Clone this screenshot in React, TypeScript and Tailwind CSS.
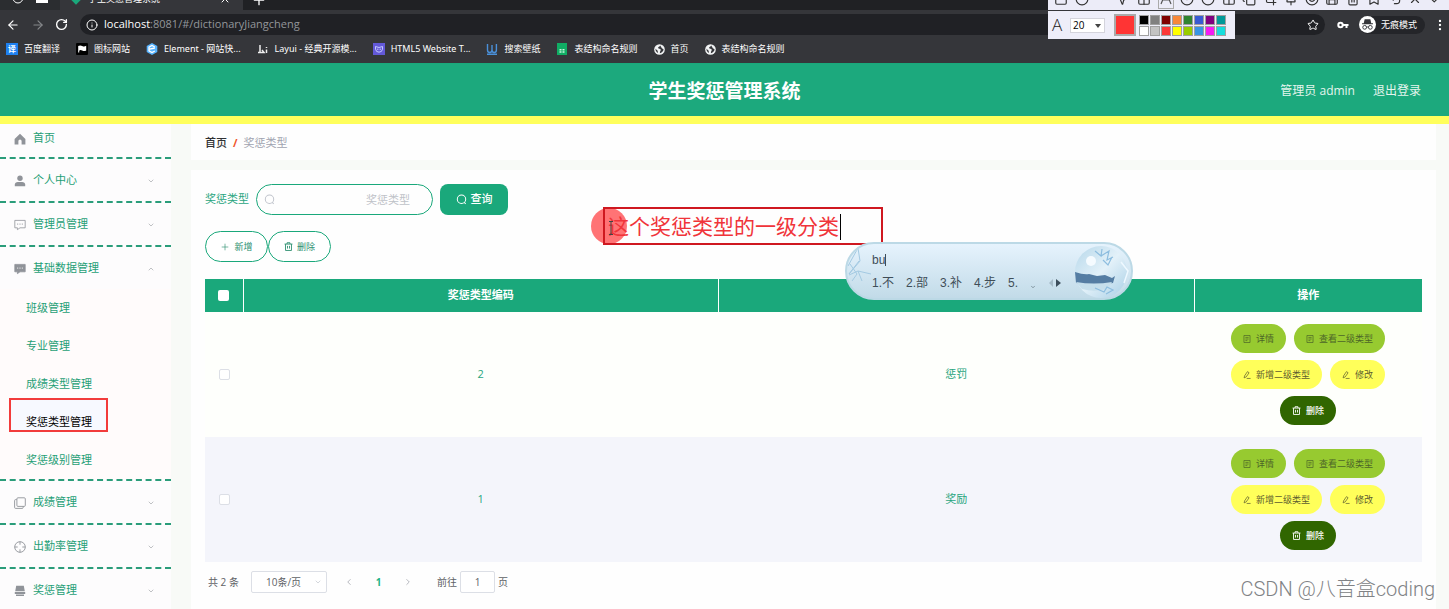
import { ReactNode, useState } from 'react';
import {
  ArrowLeft, ArrowRight, Bookmark, Check, ChevronDown, ChevronLeft, ChevronRight, ChevronUp, Circle,
  CircleDot, Copy, Crop, Grid2x2, Info, Minus, MoreVertical, MousePointer2, Pin, Plus, RotateCw, Save, Smile,
  Square, Star, Trash2, Undo2, X
} from 'lucide-react';

type MenuEntry = {
  label: string;
  icon: ReactNode;
  children?: string[];
};

type RewardType = {
  code: number;
  name: string;
};

const rewardTypes: RewardType[] = [
  { code: 2, name: '惩罚' },
  { code: 1, name: '奖励' }
];

const swatches = [
  'bg-black', 'bg-[#808080]', 'bg-[#800000]', 'bg-[#f7883a]', 'bg-[#308430]', 'bg-[#385ad3]', 'bg-[#800080]', 'bg-[#009999]',
  'bg-white', 'bg-[#c3c3c3]', 'bg-[#fb3838]', 'bg-[#ffff01]', 'bg-[#99cc00]', 'bg-[#3894e4]', 'bg-[#f31bf3]', 'bg-[#16dcdc]'
];

const drawTools = [Square, Circle, Minus, MousePointer2, Grid2x2, CircleDot, Circle, Grid2x2, Copy, Crop, Pin, Smile, Save, Trash2, Bookmark, Undo2, X, Check];

function HomeIcon() {
  return (
    <svg viewBox="0 0 12 12" className="size-3 fill-[#909399]">
      <path d="M6 .8 11.4 6v5.4H7.6V8a1.6 1.6 0 0 0-3.2 0v3.4H.6V6z" />
    </svg>
  );
}

function UserIcon() {
  return (
    <svg viewBox="0 0 12 12" className="size-3 fill-[#909399]">
      <circle cx="6" cy="3.3" r="2.7" />
      <path d="M.8 11.3V9.6c0-1.6 1.4-2.6 3-2.6h4.4c1.6 0 3 1 3 2.6v1.7z" />
    </svg>
  );
}

function ChatIcon({ solid = false }: { solid?: boolean }) {
  return (
    <svg viewBox="0 0 12 12" className="size-3">
      <path d="M.8 1.4h10.4v7.4H6l-2.6 1.9V8.8H.8z" fill={solid ? '#909399' : 'none'} stroke="#909399" strokeWidth=".8" />
      <path d="M3.2 5.1h1M5.5 5.1h1M7.8 5.1h1" stroke={solid ? '#fff' : '#909399'} strokeWidth="1" />
    </svg>
  );
}

function CopyIcon() {
  return (
    <svg viewBox="0 0 12 12" className="size-3 fill-none stroke-[#909399]" strokeWidth=".9">
      <rect x="2.9" y=".8" width="8.4" height="8.6" rx="1" />
      <path d="M2.7 2.6H1.6a1 1 0 0 0-1 1v6.8a1 1 0 0 0 1 1h6.6a1 1 0 0 0 1-1v-.9" />
    </svg>
  );
}

function AimIcon() {
  return (
    <svg viewBox="0 0 12 12" className="size-3 fill-none stroke-[#909399]" strokeWidth=".9">
      <circle cx="6" cy="6" r="5.3" />
      <path d="M6 .7v3M6 8.3v3M.7 6h3M8.3 6h3" />
    </svg>
  );
}

function ShopIcon() {
  return (
    <svg viewBox="0 0 12 12" className="size-3 fill-[#909399]">
      <path d="M2.2.8h7.6l1 5.4H1.2zM.8 6.9h10.4v2H.8zM2 9.4h8v1.7H2z" />
    </svg>
  );
}

function DocIcon() {
  return (
    <svg viewBox="0 0 10 10" className="size-2 fill-none stroke-current" strokeWidth=".9">
      <path d="M1.2.6h7.6v8.8H1.2zM3 3h4M3 5h4M3 7h2.4" />
    </svg>
  );
}

function EditIcon() {
  return (
    <svg viewBox="0 0 10 10" className="size-2 fill-none stroke-current" strokeWidth=".9">
      <path d="M1.4 8.6 2 6l3.6-5.2 2 1.4L4 7.4zM4.6 9.3h4.9" />
    </svg>
  );
}

function TrashIcon() {
  return (
    <svg viewBox="0 0 10 10" className="size-[9px] fill-none stroke-current" strokeWidth="1">
      <path d="M.6 2.3h8.8M3.4 2.3V.8h3.2v1.5M1.7 2.3v7.1h6.6V2.3M3.9 4.3v3M6.1 4.3v3" />
    </svg>
  );
}

function SearchIcon() {
  return (
    <svg viewBox="0 0 12 12" className="size-[11px] fill-none stroke-current" strokeWidth="1.1">
      <circle cx="6" cy="5.7" r="4.6" />
      <path d="m9 9.2 1.6 1.6" />
    </svg>
  );
}

function GlobeIcon() {
  return (
    <svg viewBox="0 0 12 12" className="size-[11px]">
      <circle cx="6" cy="6" r="5.8" fill="#f1f3f4" />
      <path d="M6.8 1.6c-.3 1.6-2.7 1.2-2.3 2.8.3 1 2.4.4 2.8 1.6.4 1.3-1 1.4-.9 4.2 2-.5 4-2.2 4-4.4L8.6 4.6zM1.6 5.2 4 7.3l.3 2.4C2.7 9 1.5 7.4 1.6 5.2z" fill="#35363a" />
    </svg>
  );
}

const bookmarks: { label: string; icon: ReactNode }[] = [
  { label: '百度翻译', icon: <span className="flex size-3 items-center justify-center bg-[#1e80f0] text-[8px] font-bold text-white">译</span> },
  {
    label: '图标网站',
    icon: (
      <svg viewBox="0 0 12 12" className="size-3"><rect width="12" height="12" rx="1" /><path d="M2.2 9.5V3q2-1.2 4 0t4-.2v4.8q-2 1-4 0t-3 .1v1.8z" fill="#fff" /></svg>
    )
  },
  {
    label: 'Element - 网站快...',
    icon: (
      <svg viewBox="0 0 12 12" className="size-3"><path d="M6 0 11.3 3v6L6 12 .7 9V3z" fill="#58b4ff" /><path d="M8.8 4 6 2.5 3 4.2v3.6l3 1.7L8.8 8M3.5 6.2 8.8 5" fill="none" stroke="#fff" strokeWidth="1.3" /></svg>
    )
  },
  {
    label: 'Layui - 经典开源模...',
    icon: (
      <svg viewBox="0 0 12 12" className="size-3 fill-none stroke-[#eee]" strokeWidth="1.5"><path d="M3 2v7.5H1M3.5 9.5H7L5 7M9.5 4v1M9.5 6.5V10" /></svg>
    )
  },
  {
    label: 'HTML5 Website T...',
    icon: (
      <svg viewBox="0 0 12 12" className="size-3"><rect width="12" height="12" fill="#6359d8" /><path d="M2.5 3.5q3.5 2 7 0v2.7q-.5 3-3.5 3t-3.5-3z" fill="none" stroke="#c4c8ff" /><path d="M4.3 6.2h1M6.7 6.2h1" stroke="#fff" /></svg>
    )
  },
  {
    label: '搜索壁纸',
    icon: (
      <svg viewBox="0 0 12 12" className="size-3 fill-none stroke-[#4a90d9]" strokeWidth="1.4"><path d="M1.5 1v6q0 2.5 2.2 2.5T6 7V2M6 7q0 2.5 2.2 2.5T10.4 7V1M1 11.3h10" /></svg>
    )
  },
  {
    label: '表结构命名规则',
    icon: (
      <svg viewBox="0 0 12 12" className="size-3"><path d="M1 0h10v12H1z" fill="#10ad64" /><path d="M3.5 6h2v1.5h-2zM6.5 6h2v1.5h-2zM3.5 8.3h2v1.5h-2zM6.5 8.3h2v1.5h-2z" fill="#c9f5de" /></svg>
    )
  },
  { label: '首页', icon: <GlobeIcon /> },
  { label: '表结构命名规则', icon: <GlobeIcon /> }
];

const menu: MenuEntry[] = [
  { label: '个人中心', icon: <UserIcon /> },
  { label: '管理员管理', icon: <ChatIcon /> },
  { label: '基础数据管理', icon: <ChatIcon solid />, children: ['班级管理', '专业管理', '成绩类型管理', '奖惩类型管理', '奖惩级别管理'] },
  { label: '成绩管理', icon: <CopyIcon /> },
  { label: '出勤率管理', icon: <AimIcon /> },
  { label: '奖惩管理', icon: <ShopIcon /> }
];

function BrowserBar() {
  return (
    <div className="shrink-0 bg-[#35363a] text-white">
      <div className="flex h-[10px] overflow-hidden bg-[#202124]">
        <div className="flex w-[60px] shrink-0 justify-between bg-[#2b2d30] px-3">
          <Circle className="-mt-2 size-3" />
          <div className="h-[3px] w-3 bg-white" />
        </div>
        <div className="-mt-3 flex h-[22px] w-[183px] shrink-0 items-center gap-2 bg-[#35363a] px-3 text-[9px]">
          <span className="size-2 rotate-45 bg-[#1aa87b]" />
          <span className="grow">学生奖惩管理系统</span>
          <X className="size-3" />
        </div>
        <Plus className="-mt-2 ml-2 size-4" />
      </div>
      <div className="flex h-[25px] items-center pt-1">
        <div className="flex w-20 shrink-0 items-center justify-between pr-3 pl-[6px]">
          <button type="button" aria-label="后退"><ArrowLeft className="size-[14px]" /></button>
          <button type="button" aria-label="前进"><ArrowRight className="size-[14px] text-[#85878a]" /></button>
          <button type="button" aria-label="刷新"><RotateCw className="size-[13px]" strokeWidth={2.5} /></button>
        </div>
        <div className="flex h-[21px] grow items-center rounded-full bg-[#202125] pr-[6px] pl-[6px] text-[11px] text-[#93969a]">
          <Info className="mr-[6px] size-3 text-white" />
          <span className="grow"><span className="text-white">localhost</span>:8081/#/dictionaryJiangcheng</span>
          <button type="button" aria-label="收藏"><Star className="size-3 text-white" /></button>
        </div>
        <div className="flex shrink-0 items-center pl-3">
          <svg viewBox="0 0 12 8" className="h-2 w-3">
            <circle cx="3.5" cy="4" r="2.2" fill="none" stroke="#fff" strokeWidth="2" />
            <path d="M6 4h5.5M9.5 4v3" stroke="#fff" strokeWidth="2" />
          </svg>
          <span className="ml-[10px] flex h-[18px] items-center gap-[5px] rounded-full bg-[#242529] pr-2 text-[9px]">
            <svg viewBox="0 0 18 18" className="size-[17px]">
              <circle cx="9" cy="9" r="9" fill="#fff" />
              <path d="M6 3.5h6l1 4.200h1.800v1H3.200v-1H5z" fill="#35363a" />
              <path d="M8 12q1-.8 2 0" fill="none" stroke="#35363a" />
              <circle cx="6" cy="12" r="2" fill="none" stroke="#35363a" />
              <circle cx="12" cy="12" r="2" fill="none" stroke="#35363a" />
            </svg>
            无痕模式
          </span>
          <MoreVertical className="mr-[2px] ml-2 size-[14px]" strokeWidth={2} />
        </div>
      </div>
      <nav className="flex h-7 items-center gap-4 px-[6px] font-['Noto_Sans','Noto_Sans_CJK_SC',sans-serif] text-[9px]">
        {bookmarks.map((item, index) => (
          <a key={index} href="#" className="flex shrink-0 items-center gap-[6px]">{item.icon}{item.label}</a>
        ))}
      </nav>
      <div className="h-px bg-[#1aa87b]" />
    </div>
  );
}

function DrawToolbar() {
  return (
    <div className="absolute top-0 right-0 w-[401px]">
      <div className="h-[10px] overflow-hidden bg-[#ececf8] px-[6px]">
        <div className="-mt-3 flex h-[22px] items-center justify-between text-[#333]">
          {drawTools.slice(0, 5).map((Tool, index) => <Tool key={index} className="size-[14px]" />)}
          <svg viewBox="0 0 16 22" className="h-[22px] w-4 fill-none stroke-[#555]">
            <rect x=".5" y=".5" width="15" height="20" stroke="#aaa" />
            <path d="m3 16 5-12 5 12M5 12h6" strokeWidth="1.2" />
          </svg>
          {drawTools.slice(5).map((Tool, index) => <Tool key={index} className="size-[14px]" />)}
        </div>
      </div>
      <div className="mt-px flex h-7 w-[187px] items-center bg-[#eeeef9] pl-1">
        <span className="w-[18px] text-[17px] font-light text-[#222]">A</span>
        <div className="relative flex">
          <select aria-label="字号" className="h-[15px] w-[35px] appearance-none border border-[#d4d4dc] bg-white pl-[2px] text-[10px] leading-3 text-black">
            <option>20</option>
          </select>
          <span className="pointer-events-none absolute top-[6px] right-1 border-x-[3px] border-t-4 border-x-transparent border-t-[#444]" />
        </div>
        <button type="button" aria-label="当前颜色" className="mr-[3px] ml-[9px] size-[22px] border-2 border-[#aaa] bg-[#ff3434]" />
        <div className="grid grid-cols-8 gap-px">
          {swatches.map((color) => (
            <button key={color} type="button" aria-label="颜色" className={`size-[10px] border border-[#a0a0a0] ${color}`} />
          ))}
        </div>
      </div>
    </div>
  );
}

function Sidebar({ active, onSelect }: { active: string; onSelect: (label: string) => void }) {
  return (
    <aside className="w-[171px] shrink-0 bg-[#fdfcfd] text-[11px] text-[#1f9f76]">
      <a href="#" className="flex h-[35px] items-start gap-[7px] border-b-2 border-dashed border-[#2a9d7a] pt-[6px] pl-[14px]">
        <span className="pt-[3px]"><HomeIcon /></span>首页
      </a>
      <ul>
        {menu.map((entry) => (
          <li key={entry.label} className="border-b-2 border-dashed border-[#2a9d7a]">
            <button type="button" className="flex h-[42px] w-full items-center gap-[7px] pt-px pr-4 pl-[14px]">
              {entry.icon}
              <span className="grow text-left">{entry.label}</span>
              {entry.children ? <ChevronUp className="size-2 text-[#a0a3a8]" /> : <ChevronDown className="size-2 text-[#a0a3a8]" />}
            </button>
            {entry.children ? (
              <ul className="bg-[#fffbfb]">
                {entry.children.map((child) => (
                  <li key={child} className="relative">
                    {child === '奖惩类型管理' ? <span className="pointer-events-none absolute -top-[5px] left-[9px] h-[34px] w-[99px] border-2 border-[#f23b3b] bg-[#f7f9ff]" /> : null}
                    <button
                      type="button"
                      onClick={() => onSelect(child)}
                      className={`relative flex h-[38px] w-full items-center pl-[26px] ${child === active ? 'text-black' : ''}`}
                    >
                      {child}
                    </button>
                  </li>
                ))}
              </ul>
            ) : null}
          </li>
        ))}
      </ul>
    </aside>
  );
}

function RowActions() {
  const base = 'flex h-[29px] items-center gap-[5px] rounded-full px-3';
  return (
    <div className="flex flex-col items-center gap-[7px] text-[9px]">
      <div className="flex gap-2">
        <button type="button" className={`${base} bg-[#97ca30] text-[#4c6628]`}><DocIcon />详情</button>
        <button type="button" className={`${base} bg-[#97ca30] text-[#4c6628]`}><DocIcon />查看二级类型</button>
      </div>
      <div className="flex gap-2">
        <button type="button" className={`${base} bg-[#ffff5a] text-[#5d5d30]`}><EditIcon />新增二级类型</button>
        <button type="button" className={`${base} bg-[#ffff5a] text-[#5d5d30]`}><EditIcon />修改</button>
      </div>
      <button type="button" className={`${base} bg-[#306600] font-medium text-white`}><TrashIcon />删除</button>
    </div>
  );
}

function RewardTable() {
  return (
    <table className="w-full table-fixed text-center text-[11px] text-[#2aa57e]">
      <thead className="bg-[#1aa87b] text-white">
        <tr className="h-[33px]">
          <th className="w-[38px] border-r border-white">
            <input type="checkbox" aria-label="全选" className="mx-auto block size-[11px] appearance-none rounded-xs bg-white" />
          </th>
          <th className="border-r border-white">奖惩类型编码</th>
          <th aria-label="奖惩类型" className="border-r border-white" />
          <th className="w-[228px]">操作</th>
        </tr>
      </thead>
      <tbody>
        {rewardTypes.map((item) => (
          <tr key={item.code} className="h-[125px] bg-[#fefffc] even:bg-[#f4f5fb]">
            <td>
              <input type="checkbox" aria-label={`选择${item.name}`} className="mx-auto block size-[11px] appearance-none rounded-xs border border-[#dcdfe6] bg-white" />
            </td>
            <td>{item.code}</td>
            <td>{item.name}</td>
            <td><RowActions /></td>
          </tr>
        ))}
      </tbody>
    </table>
  );
}

function Pagination() {
  return (
    <div className="mt-[9px] flex h-[22px] items-center pl-[3px] text-[10px] text-[#606266]">
      <span className="w-[43px]">共 2 条</span>
      <div className="relative">
        <select aria-label="每页条数" className="h-[22px] w-[76px] appearance-none rounded-xs border border-[#dcdfe6] bg-white pl-[14px]">
          <option>10条/页</option>
        </select>
        <ChevronDown className="pointer-events-none absolute top-[7px] right-[5px] size-2 text-[#c0c4cc]" />
      </div>
      <button type="button" aria-label="上一页" className="ml-[17px]"><ChevronLeft className="size-[10px] text-[#a8abb2]" /></button>
      <button type="button" className="w-[49px] font-bold text-[#1fb385]">1</button>
      <button type="button" aria-label="下一页"><ChevronRight className="size-[10px] text-[#a8abb2]" /></button>
      <label className="ml-6 flex items-center gap-[3px]">
        前往
        <input defaultValue="1" className="h-[22px] w-[35px] rounded-xs border border-[#dcdfe6] bg-white text-center" />
        页
      </label>
    </div>
  );
}

function ImePopup() {
  return (
    <div className="absolute top-[242px] left-[845px] flex h-[58px] w-[288px] overflow-hidden rounded-full border-2 border-[#bcd9e6] bg-linear-to-b from-[#e6f3fd] to-[#c2dbe8] font-['Liberation_Sans','Noto_Sans_CJK_SC',sans-serif] text-[12px] text-[#3f4e58]">
      <svg viewBox="0 0 25 54" className="h-full w-[25px] shrink-0 fill-none stroke-[#a3c9e2]" strokeWidth="1">
        <path d="M1 22 11 4l2 13-11 13 10-13M2 31l9-4 13 3M3 20l7 10-5 7M11 27l4 10" />
      </svg>
      <div className="flex grow flex-col justify-center">
        <span className="flex h-[23px] items-center">bu<span className="h-3 border-l border-[#3f4e58]" /></span>
        <div className="flex items-center gap-3 leading-[22px]">
          <span>1.不</span><span>2.部</span><span>3.补</span><span>4.步</span><span>5.</span>
          <ChevronDown className="mt-2 size-[6px]" />
          <svg viewBox="0 0 14 10" className="h-[10px] w-[14px]">
            <path d="M5 1v8L1 5z" fill="#a6bcc9" />
            <path d="M8 1v8l5-4z" fill="#3d4f5c" />
          </svg>
        </div>
      </div>
      <svg viewBox="0 0 58 54" className="h-full w-[58px] shrink-0">
        <defs>
          <linearGradient id="orb" x1="0" y1="0" x2="1" y2="1">
            <stop offset="0" stopColor="#b6d7ea" />
            <stop offset=".5" stopColor="#e3f1f9" />
            <stop offset="1" stopColor="#a8cfe6" />
          </linearGradient>
        </defs>
        <circle cx="28" cy="28" r="26" fill="url(#orb)" />
        <circle cx="18" cy="17" r="5" fill="#f5fbff" />
        <path d="M2 28q9 3 14 2l8 2 8-1 7 3 3-2-2 7q-16 3-37 0z" fill="#557da3" />
        <path d="M3 38q18 3 36 0l-4 6q-12 5-26 1z" fill="#c6dfec" />
        <path d="m22 7 6 5 1-7M28 12l8-5-2 9 6-3M30 16l5 5 4-8M22 44l9 4 3-5 6 3-7 4" fill="none" stroke="#8dbddf" strokeWidth="1.2" />
        <path d="m48 18 7 9-4 12" fill="none" stroke="#eef8ff" strokeWidth="1.5" />
      </svg>
    </div>
  );
}

export default function App() {
  const [active, setActive] = useState('奖惩类型管理');
  const [keyword, setKeyword] = useState('');

  return (
    <div className="relative flex h-screen flex-col overflow-hidden bg-[#f8faf7] font-['Open_Sans','Noto_Sans_CJK_SC',sans-serif]">
      <BrowserBar />

      <header className="grid h-[60px] shrink-0 grid-cols-3 items-center border-b-8 border-[#ffff5c] bg-[#1ca97d] pt-[2px] text-white">
        <h1 className="col-start-2 text-center text-[19px] font-bold">学生奖惩管理系统</h1>
        <div className="flex justify-end gap-[18px] pr-7 text-[12px] text-[#e4f5ee]">
          <span>管理员 admin</span>
          <a href="#">退出登录</a>
        </div>
      </header>

      <div className="flex min-h-0 grow">
        <Sidebar active={active} onSelect={setActive} />

        <main className="flex grow flex-col pr-[13px] pl-5">
          <nav className="flex h-9 shrink-0 items-center gap-[6px] bg-[#fefefe] px-[14px] pt-[2px] text-[11px]">
            <a href="#" className="font-medium text-[#303133]">首页</a>
            <span className="font-bold text-[#f0562c]">/</span>
            <span className="text-[#a0a3b0]">奖惩类型</span>
          </nav>

          <section className="mt-[10px] grow bg-[#fefefe] px-[14px] pt-[14px]">
            <form onSubmit={(event) => event.preventDefault()} className="mb-4 flex items-center gap-[7px] text-[11px]">
              <label htmlFor="keyword" className="text-[#2aa57e]">奖惩类型</label>
              <div className="relative">
                <span className="absolute top-[10px] left-2 text-[#c0c4cc]"><SearchIcon /></span>
                <input
                  id="keyword"
                  value={keyword}
                  onChange={(event) => setKeyword(event.currentTarget.value)}
                  placeholder="奖惩类型"
                  className="h-[31px] w-[177px] rounded-full border border-[#1aa87b] pr-[22px] pl-6 text-right placeholder:text-[#bfc2c8]"
                />
              </div>
              <button type="submit" className="flex h-[31px] w-[68px] items-center justify-center gap-1 rounded-lg bg-[#1aa87b] font-medium text-white">
                <SearchIcon />查询
              </button>
            </form>

            <div className="mb-[17px] flex text-[9px] text-[#2c8f6f]">
              <button type="button" className="flex h-[31px] w-[63px] items-center justify-center gap-1 rounded-full border border-[#1aa87b] bg-white">
                <Plus className="size-[10px]" strokeWidth={1.5} />新增
              </button>
              <button type="button" className="flex h-[31px] w-[63px] items-center justify-center gap-1 rounded-full border border-[#1aa87b] bg-white">
                <TrashIcon />删除
              </button>
            </div>

            <RewardTable />
            <Pagination />
          </section>
        </main>
      </div>

      <DrawToolbar />

      <span className="absolute top-[208px] left-[591px] size-9 rounded-full bg-[#ff7375]" />
      <div className="absolute top-[207px] left-[603px] flex h-[38px] w-[280px] items-center border-2 border-[#cf1820] pt-px pl-[3px] text-[21px] text-[#f0343a]">
        这个奖惩类型的一级分类
        <span className="ml-px h-[26px] border-l border-black" />
      </div>
      <svg viewBox="0 0 6 14" className="absolute top-[221px] left-[608px] h-[14px] w-[6px] fill-none stroke-[#444]">
        <path d="M1 .5h4M3 .5v13M1 13.500h4" />
      </svg>
      <ImePopup />

      <span className="absolute right-[14px] bottom-[5px] font-['Roboto','Noto_Sans_CJK_SC',sans-serif] text-[20px] font-light text-[#808285]">CSDN @八音盒coding</span>
    </div>
  );
}
